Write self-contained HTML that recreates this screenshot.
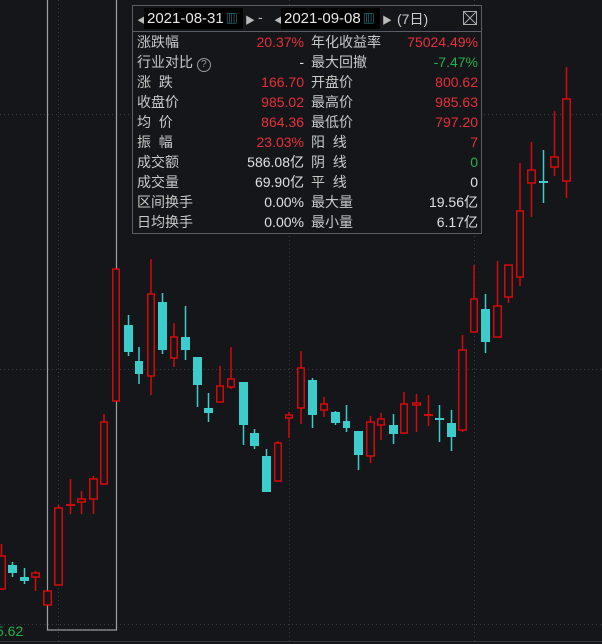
<!DOCTYPE html>
<html><head><meta charset="utf-8"><style>
html,body{margin:0;padding:0;background:#14161a;width:602px;height:644px;overflow:hidden;font-family:"Liberation Sans","Noto Sans CJK SC",sans-serif}
svg{position:absolute;left:0;top:0}
#p{position:absolute;left:132px;top:5px;width:348px;height:227px;border:1px solid #5a5d63;background:#14161a;font-size:14px;color:#c8c8c8}
#hd{height:25px;border-bottom:1px solid #5a5d63;position:relative}
.db{position:absolute;top:2px;height:21px;background:#000;color:#e8e8e8;font-size:15px;line-height:21px;padding-left:3px}
.row{height:20px;line-height:20px;position:relative}
.row span{position:absolute}
.l1{left:4px}.v1{right:177px;text-align:right}.l2{left:178px}.v2{right:3px;text-align:right}
.r{color:#e8303a}.g{color:#22b04a}.w{color:#e0e0e0}
</style></head><body>
<svg width="602" height="644">
<g stroke="#3a3d44" stroke-dasharray="1,3" stroke-width="1">
<line x1="0" y1="114.5" x2="602" y2="114.5"/><line x1="0" y1="369.5" x2="602" y2="369.5"/><line x1="0" y1="624.5" x2="602" y2="624.5"/>
<line x1="58.5" y1="0" x2="58.5" y2="644"/><line x1="289.5" y1="0" x2="289.5" y2="644"/><line x1="474.5" y1="0" x2="474.5" y2="644"/>
</g>
<line x1="0" y1="641.5" x2="602" y2="641.5" stroke="#33363c"/>
<rect x="47.5" y="-2" width="69" height="632" fill="none" stroke="#a0a0a0" stroke-width="1.2"/>
<g id="c"></g>
<text x="-4" y="636" fill="#22b04a" font-size="14" font-family="Liberation Sans">5.62</text>
</svg>
<div id="p">
<div id="hd">
<span style="position:absolute;left:4px;top:6px;color:#bbb;font-size:10px">◀</span>
<div class="db" style="left:11px;width:96px">2021-08-31<span style="color:#2aa8b0;font-size:12px;margin-left:2px">▥</span></div>
<span style="position:absolute;left:112px;top:6px;color:#bbb;font-size:10px">▶</span>
<span style="position:absolute;left:125px;top:3px;color:#bbb">-</span>
<span style="position:absolute;left:141px;top:6px;color:#bbb;font-size:10px">◀</span>
<div class="db" style="left:148px;width:96px">2021-09-08<span style="color:#2aa8b0;font-size:12px;margin-left:2px">▥</span></div>
<span style="position:absolute;left:249px;top:6px;color:#bbb;font-size:10px">▶</span>
<span style="position:absolute;left:264px;top:3px;color:#ccc;font-size:14px">(7日)</span>
<svg width="14" height="14" style="left:330px;top:5px;position:absolute"><rect x="0.5" y="0.5" width="13" height="13" fill="none" stroke="#aaa"/><path d="M1 1L13 13M13 1L1 13" stroke="#aaa"/></svg>
</div>
<div class="row"><span class="l1">涨跌幅</span><span class="v1 r">20.37%</span><span class="l2">年化收益率</span><span class="v2 r">75024.49%</span></div>
<div class="row"><span class="l1">行业对比 <span style="position:static;display:inline-block;width:12px;height:12px;border:1px solid #999;border-radius:50%;font-size:10px;line-height:12px;text-align:center;color:#999">?</span></span><span class="v1 w">-</span><span class="l2">最大回撤</span><span class="v2 g">-7.47%</span></div>
<div class="row"><span class="l1">涨&nbsp;&nbsp;跌</span><span class="v1 r">166.70</span><span class="l2">开盘价</span><span class="v2 r">800.62</span></div>
<div class="row"><span class="l1">收盘价</span><span class="v1 r">985.02</span><span class="l2">最高价</span><span class="v2 r">985.63</span></div>
<div class="row"><span class="l1">均&nbsp;&nbsp;价</span><span class="v1 r">864.36</span><span class="l2">最低价</span><span class="v2 r">797.20</span></div>
<div class="row"><span class="l1">振&nbsp;&nbsp;幅</span><span class="v1 r">23.03%</span><span class="l2">阳&nbsp;&nbsp;线</span><span class="v2 r">7</span></div>
<div class="row"><span class="l1">成交额</span><span class="v1 w">586.08亿</span><span class="l2">阴&nbsp;&nbsp;线</span><span class="v2 g">0</span></div>
<div class="row"><span class="l1">成交量</span><span class="v1 w">69.90亿</span><span class="l2">平&nbsp;&nbsp;线</span><span class="v2 w">0</span></div>
<div class="row"><span class="l1">区间换手</span><span class="v1 w">0.00%</span><span class="l2">最大量</span><span class="v2 w">19.56亿</span></div>
<div class="row"><span class="l1">日均换手</span><span class="v1 w">0.00%</span><span class="l2">最小量</span><span class="v2 w">6.17亿</span></div>
</div>
<script>
var C=[
['r',-3,6,556,589,544,590],['c',8,17,565,573,562,577],['c',20,29,577,581,568,584],['r',31,40,573,577,571,591],
['r',43,52,591,605,591,605],['r',54,63,508,585,505,585],['r',66,75,505,505,479,514],['r',77,86,499,502,491,514],
['r',89,98,479,499,476,514],
['r',100,108,422,484,414,485],['r',112,120,269,401,269,401],['c',124,133,325,352,315,356],['c',135,143,361,374,347,384],
['r',147,155,294,376,259,395],['c',158,167,302,350,293,354],['r',170,178,337,358,323,367],['c',181,190,337,350,306,360],
['c',193,202,357,385,357,407],['c',204,213,408,413,393,422],['r',216,224,386,402,366,402],['r',227,235,379,387,347,389],
['c',239,248,382,425,382,445],['c',250,259,433,446,429,449],['c',262,271,456,492,449,492],['r',274,282,443,481,441,481],
['r',285,293,415,418,412,438],['r',297,305,368,408,351,424],['c',308,317,380,415,378,428],['r',320,328,404,410,397,417],
['c',331,340,412,423,411,425],['c',343,350,421,428,405,432],['c',354,363,431,455,431,470],['r',366,375,422,456,416,463],
['r',377,385,419,425,413,440],['c',389,398,425,434,414,444],['r',400,408,404,433,392,434],['r',412,421,403,405,394,432],
['r',424,433,415,415,395,426],['c',435,444,419,419,405,442],['c',447,456,423,437,410,451],['r',458,467,350,430,335,432],
['r',470,478,299,332,265,332],['c',481,490,309,342,294,353],['r',493,502,306,337,261,337],['r',504,513,265,297,265,303],
['r',516,524,211,277,163,286],['r',527,536,170,183,142,217],['c',539,548,182,182,150,203],['r',550,559,157,167,111,176],
['r',562,571,99,181,67,198]];
var s='';
C.forEach(function(k){var x1=k[1],x2=k[2],y1=k[3],y2=k[4],hi=k[5],lo=k[6],m=(x1+x2)/2;
var col=k[0]=='r'?'#d40a0a':'#3ccccc';
s+='<line x1="'+m+'" y1="'+hi+'" x2="'+m+'" y2="'+lo+'" stroke="'+col+'" stroke-width="1.5"/>';
if(y2-y1<1){s+='<line x1="'+x1+'" y1="'+y1+'" x2="'+x2+'" y2="'+y1+'" stroke="'+col+'" stroke-width="2"/>';}
else if(k[0]=='r'){s+='<rect x="'+(x1+0.75)+'" y="'+y1+'" width="'+(x2-x1-1.5)+'" height="'+(y2-y1)+'" fill="#14161a" stroke="'+col+'" stroke-width="1.5"/>';}
else{s+='<rect x="'+x1+'" y="'+y1+'" width="'+(x2-x1)+'" height="'+(y2-y1)+'" fill="'+col+'"/>';}
});
document.getElementById('c').innerHTML=s;
</script>
</body></html>
